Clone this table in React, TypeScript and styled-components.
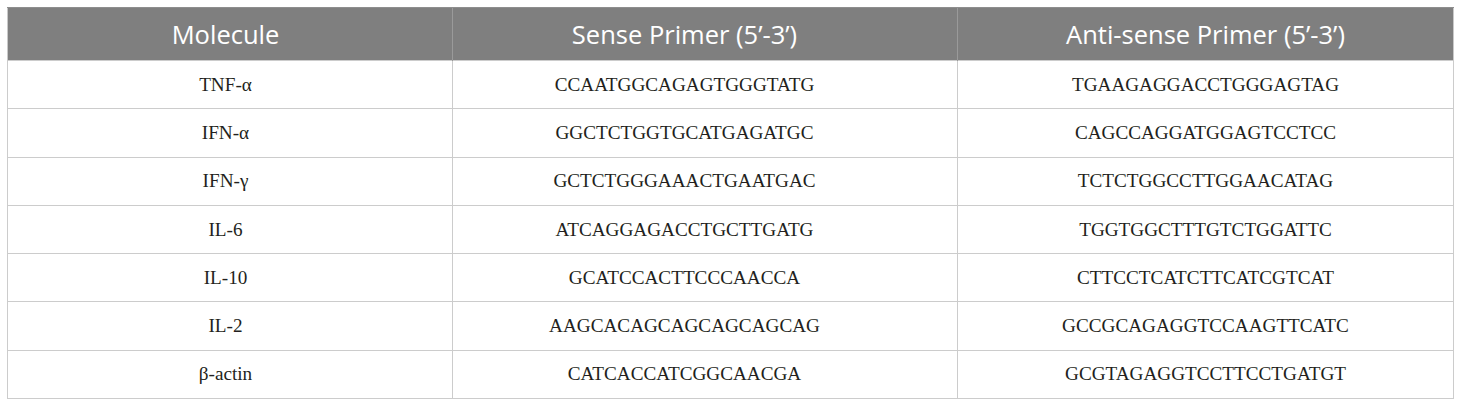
import React from "react";
import styled, { createGlobalStyle, css } from "styled-components";

const Global = createGlobalStyle`
  html, body { margin: 0; padding: 0; background: #ffffff; }
  body { padding: 7px 7px 0 7px; }
`;

const columnOffsets = css`
  &:nth-child(1) { padding-right: 9px; }
  &:nth-child(2) { padding-right: 41px; }
`;

const Table = styled.table`
  width: 1446px;
  border-collapse: collapse;
  table-layout: fixed;
  border: 1px solid #c9c9c9;
`;

const HeadCell = styled.th`
  height: 52px;
  padding: 0;
  background: #7f7f7f;
  color: #ffffff;
  font-family: "Open Sans", "Noto Sans", sans-serif;
  font-weight: 400;
  font-size: 25.5px;
  text-align: center;
  vertical-align: middle;
  border-left: 1px solid #9a9a9a;
  border-top: 1px solid #8e8e8e;
  &:first-child { border-left: 1px solid #c9c9c9; }
  ${columnOffsets}
`;

const Row = styled.tr`
  height: 48.3px;
`;

const Cell = styled.td`
  padding: 0;
  text-align: center;
  vertical-align: middle;
  font-family: "Liberation Serif", "Times New Roman", serif;
  font-size: 19.2px;
  color: #231f20;
  border: 1px solid #cccccc;
  ${columnOffsets}
`;

const rows: [string, string, string][] = [
  ["TNF-α", "CCAATGGCAGAGTGGGTATG", "TGAAGAGGACCTGGGAGTAG"],
  ["IFN-α", "GGCTCTGGTGCATGAGATGC", "CAGCCAGGATGGAGTCCTCC"],
  ["IFN-γ", "GCTCTGGGAAACTGAATGAC", "TCTCTGGCCTTGGAACATAG"],
  ["IL-6", "ATCAGGAGACCTGCTTGATG", "TGGTGGCTTTGTCTGGATTC"],
  ["IL-10", "GCATCCACTTCCCAACCA", "CTTCCTCATCTTCATCGTCAT"],
  ["IL-2", "AAGCACAGCAGCAGCAGCAG", "GCCGCAGAGGTCCAAGTTCATC"],
  ["β-actin", "CATCACCATCGGCAACGA", "GCGTAGAGGTCCTTCCTGATGT"],
];

export default function App() {
  return (
    <>
      <Global />
      <Table>
        <colgroup>
          <col style={{ width: 445 }} />
          <col style={{ width: 505 }} />
          <col style={{ width: 496 }} />
        </colgroup>
        <thead>
          <tr>
            <HeadCell>Molecule</HeadCell>
            <HeadCell>Sense Primer (5’-3’)</HeadCell>
            <HeadCell>Anti-sense Primer (5’-3’)</HeadCell>
          </tr>
        </thead>
        <tbody>
          {rows.map((r) => (
            <Row key={r[0]}>
              <Cell>{r[0]}</Cell>
              <Cell>{r[1]}</Cell>
              <Cell>{r[2]}</Cell>
            </Row>
          ))}
        </tbody>
      </Table>
    </>
  );
}
